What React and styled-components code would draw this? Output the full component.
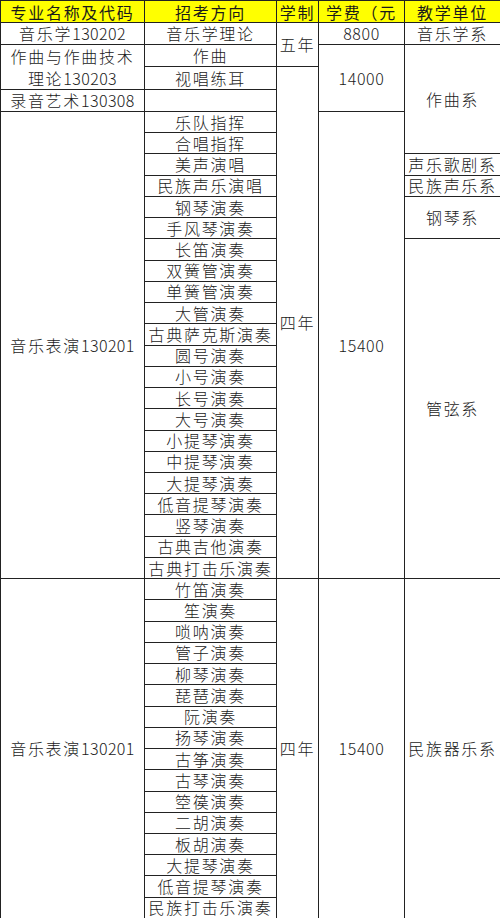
import React from 'react'
import styled, { createGlobalStyle } from 'styled-components'

const GlobalStyle = createGlobalStyle`
  html, body {
    margin: 0;
    padding: 0;
    background: #fff;
  }
`;

const Sheet = styled.table`
  width: 500px;
  border-collapse: collapse;
  table-layout: fixed;
  font-family: "Noto Sans CJK SC", "Liberation Sans", sans-serif;
  font-weight: 300;
  color: #1a1a1a;
  font-size: 16px;
  letter-spacing: 1.7px;
`;

const Row = styled.tr`
  height: ${p => (p.$tall ? '22px' : '21.24px')};
`;

const HeadCell = styled.th`
  background: #ffff00;
  font-weight: 400;
  border: 1px solid #222;
  padding: 0;
  text-align: center;
  white-space: nowrap;
  overflow: hidden;
  line-height: 18px;
`;

const Cell = styled.td`
  border: 1px solid #222;
  padding: 0;
  text-align: center;
  vertical-align: middle;
  white-space: nowrap;
  line-height: ${p => (p.$wrap ? '22px' : '17px')};
  letter-spacing: ${p => (p.$num ? '0.6px' : '1.7px')};
`;

const Num = styled.span`
  letter-spacing: 0.4px;
`;

const group1 = [
  '乐队指挥', '合唱指挥', '美声演唱', '民族声乐演唱', '钢琴演奏', '手风琴演奏',
  '长笛演奏', '双簧管演奏', '单簧管演奏', '大管演奏', '古典萨克斯演奏', '圆号演奏',
  '小号演奏', '长号演奏', '大号演奏', '小提琴演奏', '中提琴演奏', '大提琴演奏',
  '低音提琴演奏', '竖琴演奏', '古典吉他演奏', '古典打击乐演奏'
]

const group2 = [
  '竹笛演奏', '笙演奏', '唢呐演奏', '管子演奏', '柳琴演奏', '琵琶演奏', '阮演奏',
  '扬琴演奏', '古筝演奏', '古琴演奏', '箜篌演奏', '二胡演奏', '板胡演奏',
  '大提琴演奏', '低音提琴演奏', '民族打击乐演奏'
]

// which unit cell starts on a row of group 1, and how many rows it covers
const units1 = {
  2: ['声乐歌剧系', 1],
  3: ['民族声乐系', 1],
  4: ['钢琴系', 2],
  6: ['管弦系', 16]
}

export default function App() {
  return (
    <>
      <GlobalStyle />
      <Sheet>
        <colgroup>
          <col style={{ width: 144 }} />
          <col style={{ width: 132 }} />
          <col style={{ width: 42 }} />
          <col style={{ width: 86 }} />
          <col style={{ width: 96 }} />
        </colgroup>
        <tbody>
          <Row $tall>
            <HeadCell>专业名称及代码</HeadCell>
            <HeadCell>招考方向</HeadCell>
            <HeadCell>学制</HeadCell>
            <HeadCell>学费（元</HeadCell>
            <HeadCell>教学单位</HeadCell>
          </Row>
          <Row $tall>
            <Cell>音乐学<Num>130202</Num></Cell>
            <Cell>音乐学理论</Cell>
            <Cell rowSpan={2}>五年</Cell>
            <Cell $num>8800</Cell>
            <Cell>音乐学系</Cell>
          </Row>
          <Row $tall>
            <Cell rowSpan={2} $wrap>作曲与作曲技术<br />理论<Num>130203</Num></Cell>
            <Cell>作曲</Cell>
            <Cell $num rowSpan={3}>14000</Cell>
            <Cell rowSpan={5}>作曲系</Cell>
          </Row>
          <Row $tall>
            <Cell>视唱练耳</Cell>
            <Cell rowSpan={24}>四年</Cell>
          </Row>
          <Row $tall>
            <Cell>录音艺术<Num>130308</Num></Cell>
            <Cell />
          </Row>
          {group1.map((name, i) => (
            <Row key={name + i}>
              {i === 0 && <Cell rowSpan={22}>音乐表演<Num>130201</Num></Cell>}
              <Cell>{name}</Cell>
              {i === 0 && <Cell $num rowSpan={22}>15400</Cell>}
              {units1[i] && <Cell rowSpan={units1[i][1]}>{units1[i][0]}</Cell>}
            </Row>
          ))}
          {group2.map((name, i) => (
            <Row key={name + i}>
              {i === 0 && <Cell rowSpan={16}>音乐表演<Num>130201</Num></Cell>}
              <Cell>{name}</Cell>
              {i === 0 && <Cell rowSpan={16}>四年</Cell>}
              {i === 0 && <Cell $num rowSpan={16}>15400</Cell>}
              {i === 0 && <Cell rowSpan={16}>民族器乐系</Cell>}
            </Row>
          ))}
        </tbody>
      </Sheet>
    </>
  )
}
